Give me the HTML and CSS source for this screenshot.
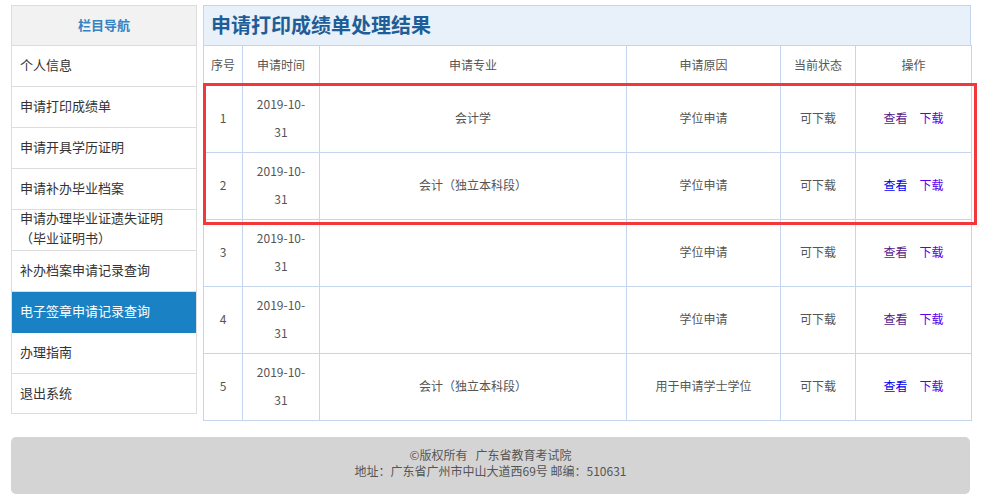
FILE: index.html
```html
<!DOCTYPE html>
<html lang="zh-CN">
<head>
<meta charset="utf-8">
<title>申请打印成绩单处理结果</title>
<link rel="stylesheet" href="styles.css">
</head>
<body>
<div class="page">
  <div class="content">
    <aside class="sidebar">
      <div class="nav-title">栏目导航</div>
      <a class="nav-item" href="#">个人信息</a>
      <a class="nav-item" href="#">申请打印成绩单</a>
      <a class="nav-item" href="#">申请开具学历证明</a>
      <a class="nav-item" href="#">申请补办毕业档案</a>
      <a class="nav-item nav-two" href="#">申请办理毕业证遗失证明<br>（毕业证明书）</a>
      <a class="nav-item" href="#">补办档案申请记录查询</a>
      <a class="nav-item active" href="#">电子签章申请记录查询</a>
      <a class="nav-item" href="#">办理指南</a>
      <a class="nav-item last" href="#">退出系统</a>
    </aside>
    <main class="main">
      <h1 class="main-title">申请打印成绩单处理结果</h1>
      <table class="result">
        <colgroup>
          <col class="c1"><col class="c2"><col class="c3"><col class="c4"><col class="c5"><col class="c6">
        </colgroup>
        <thead>
          <tr><th>序号</th><th>申请时间</th><th>申请专业</th><th>申请原因</th><th>当前状态</th><th>操作</th></tr>
        </thead>
        <tbody>
          <tr><td>1</td><td class="date">2019-10-31</td><td>会计学</td><td>学位申请</td><td>可下载</td><td><a class="view visited" href="#">查看</a><a class="dl" href="#">下载</a></td></tr>
          <tr><td>2</td><td class="date">2019-10-31</td><td>会计（独立本科段）</td><td>学位申请</td><td>可下载</td><td><a class="view" href="#">查看</a><a class="dl" href="#">下载</a></td></tr>
          <tr><td>3</td><td class="date">2019-10-31</td><td></td><td>学位申请</td><td>可下载</td><td><a class="view visited" href="#">查看</a><a class="dl" href="#">下载</a></td></tr>
          <tr><td>4</td><td class="date">2019-10-31</td><td></td><td>学位申请</td><td>可下载</td><td><a class="view visited" href="#">查看</a><a class="dl" href="#">下载</a></td></tr>
          <tr><td>5</td><td class="date">2019-10-31</td><td>会计（独立本科段）</td><td>用于申请学士学位</td><td>可下载</td><td><a class="view" href="#">查看</a><a class="dl" href="#">下载</a></td></tr>
        </tbody>
      </table>
      <div class="highlight"></div>
    </main>
  </div>
  <footer class="footer">
    <div>©版权所有&nbsp;&nbsp;&nbsp;广东省教育考试院</div>
    <div>地址：广东省广州市中山大道西69号 邮编：510631</div>
  </footer>
</div>
</body>
</html>
```

FILE: styles.css
```css
* { box-sizing: border-box; }
html, body { margin: 0; padding: 0; background: #fff; }
body {
  font-family: "Noto Sans CJK SC", "Microsoft YaHei", "Noto Sans", sans-serif;
  font-size: 12px;
  color: #555;
}
.page { padding: 5px 0 0 11px; width: 971px; }
.content { display: flex; align-items: flex-start; gap: 6px; }

.sidebar {
  width: 186px;
  border: 1px solid #ddd;
  border-bottom: none;
  display: flex;
  flex-direction: column;
}
.nav-title {
  height: 40px;
  line-height: 38px;
  text-align: center;
  background: #f2f2f2;
  color: #3682c3;
  font-weight: bold;
  font-size: 13px;
  border-bottom: 1px solid #ddd;
}
.nav-item {
  display: flex;
  align-items: center;
  height: 41px;
  padding-left: 8px;
  padding-bottom: 3px;
  font-size: 13px;
  color: #333;
  text-decoration: none;
  border-bottom: 1px solid #ddd;
}
.nav-item.nav-two { line-height: 20px; padding-bottom: 4px; }
.nav-item.active { background: #1a82c4; color: #fff; border-bottom-color: #1a82c4; }
.nav-item.last { height: 40px; }

.main {
  width: 768px;
  position: relative;
}
.main-title {
  margin: 0;
  height: 40px;
  line-height: 37px;
  padding-left: 7px;
  font-size: 20px;
  font-weight: bold;
  color: #1f5d98;
  background: #e8f0f9;
  border: 1px solid #c6d5ee;
  border-bottom: none;
}
.result {
  width: 768px;
  table-layout: fixed;
  border-collapse: collapse;
  font-size: 12px;
  color: #555;
}
.c1 { width: 39px; }
.c2 { width: 77px; }
.c3 { width: 307px; }
.c4 { width: 154px; }
.c5 { width: 75px; }
.c6 { width: 116px; }
.result th, .result td {
  border: 1px solid #c6d5ee;
  text-align: center;
  vertical-align: middle;
  padding: 0 10px 2px;
}
.result th { height: 40px; font-weight: normal; }
.result td { height: 67px; line-height: 28px; padding-bottom: 3px; }
.result th:first-child, .result td:first-child { padding-left: 0; padding-right: 0; }
.result a { text-decoration: none; }
.view { color: #0000ee; margin-right: 12px; }
.view.visited { color: #551a8b; }
.dl { color: #5a00ee; }

.highlight {
  position: absolute;
  left: 0;
  top: 78px;
  width: 774px;
  height: 142px;
  border: 3px solid #f2383a;
  pointer-events: none;
}

.footer {
  margin-top: 16px;
  width: 959px;
  height: 57px;
  background: #d4d4d4;
  border-radius: 5px;
  text-align: center;
  padding-top: 10px;
  line-height: 16px;
  color: #555;
}
```
